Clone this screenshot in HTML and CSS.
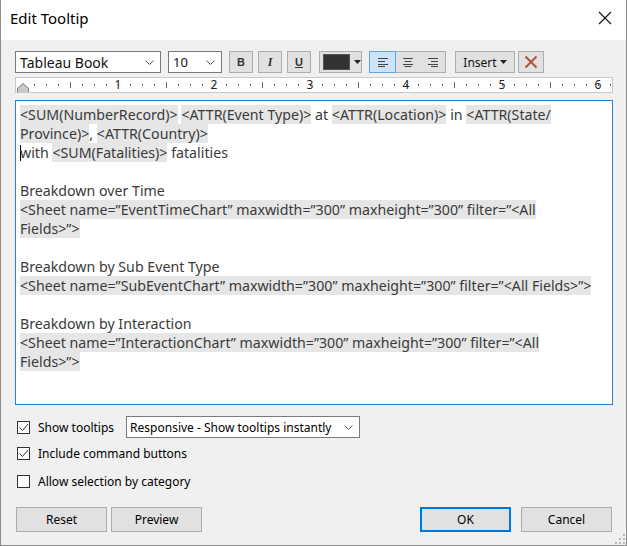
FILE: index.html
```html
<!DOCTYPE html>
<html>
<head>
<meta charset="utf-8">
<link rel="stylesheet" href="styles.css">
</head>
<body>
<div class="window">
  <div class="titlebar">
    <span class="title">Edit Tooltip</span>
    <svg class="close" width="14" height="14" viewBox="0 0 14 14"><path d="M1 1 L13 13 M13 1 L1 13" stroke="#111" stroke-width="1.1" fill="none"/></svg>
  </div>
  <div class="body">
    <div class="toolbar">
      <div class="select font-select"><span>Tableau Book</span><svg class="chev" width="9" height="5" viewBox="0 0 9 5"><path d="M0.5 0.5 L4.5 4.5 L8.5 0.5" stroke="#555" fill="none"/></svg></div>
      <div class="select size-select"><span>10</span><svg class="chev" width="9" height="5" viewBox="0 0 9 5"><path d="M0.5 0.5 L4.5 4.5 L8.5 0.5" stroke="#555" fill="none"/></svg></div>
      <div class="btn fmt bold-btn">B</div>
      <div class="btn fmt italic-btn">I</div>
      <div class="btn fmt under-btn">U</div>
      <div class="btn color-btn"><span class="swatch"></span><svg width="7" height="4" viewBox="0 0 7 4"><path d="M0 0 H7 L3.5 4 Z" fill="#222"/></svg></div>
      <div class="align-group">
        <div class="al active"><svg width="10" height="9" viewBox="0 0 10 9"><path d="M0 0.5H10M0 3.5H7M0 6.5H10M0 8.5H7" stroke="#444" stroke-width="1"/></svg></div>
        <div class="al"><svg width="10" height="9" viewBox="0 0 10 9"><path d="M0 0.5H10M1.5 3.5H8.5M0 6.5H10M1.5 8.5H8.5" stroke="#444" stroke-width="1"/></svg></div>
        <div class="al"><svg width="10" height="9" viewBox="0 0 10 9"><path d="M0 0.5H10M3 3.5H10M0 6.5H10M3 8.5H10" stroke="#444" stroke-width="1"/></svg></div>
      </div>
      <div class="btn insert-btn"><span>Insert</span><svg width="7" height="4" viewBox="0 0 7 4"><path d="M0 0 H7 L3.5 4 Z" fill="#222"/></svg></div>
      <div class="btn clear-btn"><svg width="14" height="14" viewBox="0 0 14 14"><path d="M1.5 1.5 L12.5 12.5 M12.5 1.5 L1.5 12.5" stroke="#b0533a" stroke-width="2" fill="none"/></svg></div>
    </div>
    <div class="ruler">
      <div class="nums"><span>1</span><span>2</span><span>3</span><span>4</span><span>5</span><span>6</span></div>
      <svg class="indent" width="12" height="13" viewBox="0 0 12 13"><path d="M0.5 12.5 V5.5 L6 0.5 L11.5 5.5 V12.5 Z" fill="#c9c9c9" stroke="#7a7a7a"/></svg>
    </div>
    <div class="editor">
      <div class="ln"><span class="f">&lt;SUM(NumberRecord)&gt;</span> <span class="f">&lt;ATTR(Event Type)&gt;</span> at <span class="f">&lt;ATTR(Location)&gt;</span> in <span class="f">&lt;ATTR(State/</span></div>
      <div class="ln"><span class="f">Province)&gt;</span>, <span class="f">&lt;ATTR(Country)&gt;</span></div>
      <div class="ln"><span class="caret"></span>with <span class="f">&lt;SUM(Fatalities)&gt;</span> fatalities</div>
      <div class="ln"></div>
      <div class="ln">Breakdown over Time</div>
      <div class="ln"><span class="f">&lt;Sheet name=”EventTimeChart” maxwidth=”300” maxheight=”300” filter=”&lt;All</span></div>
      <div class="ln"><span class="f">Fields&gt;”&gt;</span></div>
      <div class="ln"></div>
      <div class="ln">Breakdown by Sub Event Type</div>
      <div class="ln"><span class="f">&lt;Sheet name=”SubEventChart” maxwidth=”300” maxheight=”300” filter=”&lt;All Fields&gt;”&gt;</span></div>
      <div class="ln"></div>
      <div class="ln">Breakdown by Interaction</div>
      <div class="ln"><span class="f">&lt;Sheet name=”InteractionChart” maxwidth=”300” maxheight=”300” filter=”&lt;All</span></div>
      <div class="ln"><span class="f">Fields&gt;”&gt;</span></div>
    </div>
    <div class="opts">
      <div class="opt row1">
        <span class="cb checked"><svg width="11" height="11" viewBox="0 0 11 11"><path d="M1.5 5.5 L4.5 8.5 L10 2" stroke="#333" fill="none" stroke-width="1"/></svg></span>
        <span class="lbl">Show tooltips</span>
        <div class="select mode-select"><span>Responsive - Show tooltips instantly</span><svg class="chev" width="9" height="5" viewBox="0 0 9 5"><path d="M0.5 0.5 L4.5 4.5 L8.5 0.5" stroke="#555" fill="none"/></svg></div>
      </div>
      <div class="opt row2">
        <span class="cb checked"><svg width="11" height="11" viewBox="0 0 11 11"><path d="M1.5 5.5 L4.5 8.5 L10 2" stroke="#333" fill="none" stroke-width="1"/></svg></span>
        <span class="lbl">Include command buttons</span>
      </div>
      <div class="opt row3">
        <span class="cb"></span>
        <span class="lbl">Allow selection by category</span>
      </div>
    </div>
    <div class="buttons">
      <div class="pbtn">Reset</div>
      <div class="pbtn">Preview</div>
      <div class="spacer"></div>
      <div class="pbtn ok">OK</div>
      <div class="pbtn">Cancel</div>
    </div>
    <svg class="grip" width="10" height="10" viewBox="0 0 10 10"><g fill="#b8b8b8"><rect x="8" y="0" width="2" height="2"/><rect x="4" y="4" width="2" height="2"/><rect x="8" y="4" width="2" height="2"/><rect x="0" y="8" width="2" height="2"/><rect x="4" y="8" width="2" height="2"/><rect x="8" y="8" width="2" height="2"/></g></svg>
  </div>
</div>
</body>
</html>
```

FILE: styles.css
```css
* { box-sizing: border-box; }
html, body { margin: 0; padding: 0; }
body {
  width: 627px;
  height: 546px;
  font-family: "Noto Sans", "Open Sans", sans-serif;
  font-size: 12px;
  color: #000;
  overflow: hidden;
}
.window {
  width: 627px;
  height: 546px;
  border: 1px solid #8c8c8c;
  border-top: none;
  display: flex;
  flex-direction: column;
  background: #f0f0f0;
}
.titlebar {
  height: 40px;
  background: #fff;
  display: flex;
  align-items: center;
  justify-content: space-between;
  padding: 0 14px 4px 9px;
}
.title {
  font-size: 15px;
  color: #000;
}
.close { display: block; }
.body {
  position: relative;
  flex: 1;
  padding: 11px 13px 0 14px;
}
.toolbar {
  display: flex;
  height: 22px;
  align-items: stretch;
}
.select {
  background: #fff;
  border: 1px solid #7a7a7a;
  display: flex;
  align-items: center;
  justify-content: space-between;
  padding: 0 6px 0 4px;
  white-space: nowrap;
}
.font-select { width: 146px; font-size: 14px; color: #111; }
.size-select { width: 54px; margin-left: 7px; font-size: 13px; color: #111; }
.chev { flex: none; }
.btn {
  background: #e1e1e1;
  border: 1px solid #adadad;
  display: flex;
  align-items: center;
  justify-content: center;
}
.fmt {
  width: 24px;
  font-family: "Liberation Sans", sans-serif;
  font-weight: bold;
  font-size: 11px;
  color: #333;
}
.bold-btn { margin-left: 7px; }
.italic-btn { margin-left: 5px; font-family: "Liberation Serif", serif; font-style: italic; font-size: 12px; }
.under-btn { margin-left: 5px; text-decoration: underline; }
.color-btn {
  width: 43px;
  margin-left: 8px;
  justify-content: flex-start;
  padding-left: 3px;
  gap: 4px;
}
.swatch {
  width: 27px;
  height: 16px;
  background: #333;
  border: 1px solid #555;
}
.align-group {
  margin-left: 7px;
  display: flex;
  border: 1px solid #adadad;
  background: #e1e1e1;
}
.al {
  width: 25px;
  display: flex;
  align-items: center;
  justify-content: center;
}
.al.active {
  background: #cce4f7;
  outline: 1px solid #5ea6e0;
}
.insert-btn {
  width: 60px;
  margin-left: 9px;
  gap: 3px;
  font-size: 12px;
  color: #111;
}
.clear-btn { width: 26px; margin-left: 3px; }
.ruler {
  position: relative;
  margin-top: 4px;
  height: 16px;
  background-color: #fff;
  border: 1px solid #c9c9c9;
  background-image:
    repeating-linear-gradient(to right, #666 0 1px, transparent 1px 12px),
    repeating-linear-gradient(to right, #666 0 1px, transparent 1px 96px);
  background-repeat: no-repeat;
  background-position: 6px 6px, 54px 4px;
  background-size: calc(100% - 6px) 2px, calc(100% - 54px) 6px;
  overflow: hidden;
}
.nums {
  display: flex;
  padding-left: 54px;
  height: 14px;
  align-items: center;
}
.nums span {
  flex: none;
  width: 96px;
  text-align: center;
  font-size: 12px;
  line-height: 14px;
  color: #222;
}
.indent {
  position: absolute;
  left: 1px;
  top: 5px;
}
.editor {
  margin-top: 7px;
  height: 305px;
  background: #fff;
  border: 1px solid #2f7fc4;
  padding: 4px 4px 0 4px;
  overflow: hidden;
  font-family: "Noto Sans", "Open Sans", sans-serif;
  font-size: 14.2px;
  color: #3a3a3a;
}
.ln {
  height: 19px;
  line-height: 19px;
  white-space: nowrap;
}
.f {
  background: #e6e6e6;
  display: inline-block;
  line-height: 19px;
}
.caret {
  display: inline-block;
  width: 1px;
  height: 16px;
  background: #000;
  vertical-align: -3px;
  margin-right: -1px;
}
.opts { margin-top: 11px; }
.opt {
  display: flex;
  align-items: center;
  height: 22px;
}
.row2 { margin-top: 4px; }
.row3 { margin-top: 6px; }
.cb {
  width: 13px;
  height: 13px;
  margin-left: 2px;
  border: 1px solid #333;
  background: #fff;
  display: flex;
  align-items: center;
  justify-content: center;
}
.lbl {
  margin-left: 8px;
  color: #000;
}
.mode-select {
  margin-left: 12px;
  width: 234px;
  height: 22px;
  padding-left: 3px;
}
.buttons {
  display: flex;
  margin-top: 15px;
  padding-left: 1px;
  padding-right: 1px;
}
.pbtn {
  width: 91px;
  height: 25px;
  background: #e1e1e1;
  border: 1px solid #adadad;
  display: flex;
  align-items: center;
  justify-content: center;
  margin-right: 4px;
  color: #000;
}
.pbtn:last-child { margin-right: 0; }
.spacer { flex: 1; }
.pbtn.ok {
  border: 2px solid #0078d7;
  margin-right: 10px;
}
.grip {
  position: absolute;
  right: 1px;
  bottom: 1px;
}
```
